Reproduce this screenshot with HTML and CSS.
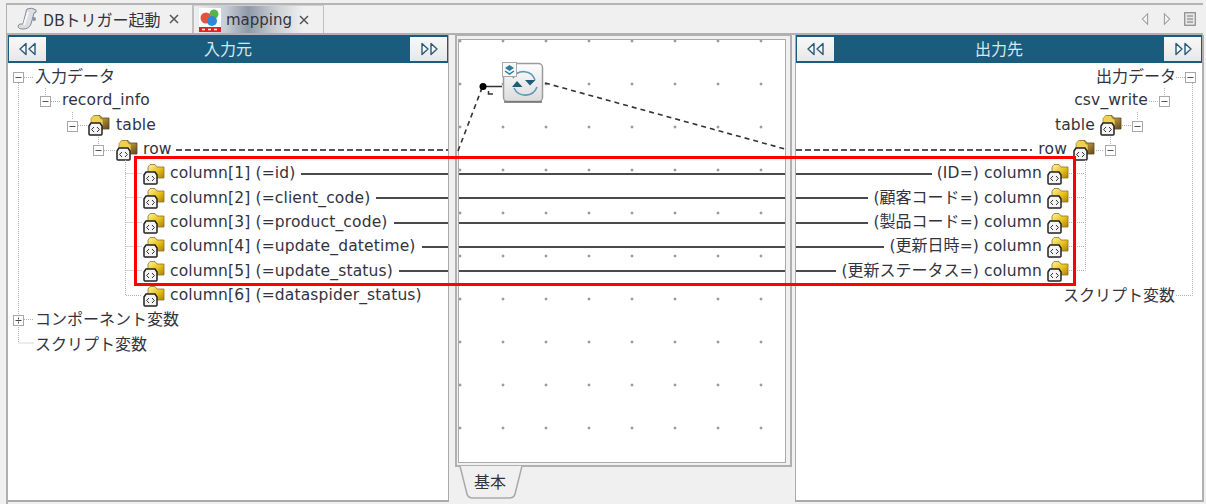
FILE: index.html
```html
<!DOCTYPE html>
<html lang="ja">
<head>
<meta charset="utf-8">
<title>mapping</title>
<link rel="stylesheet" href="styles.css">
</head>
<body>
<svg class="defs" width="0" height="0" aria-hidden="true">
  <defs>
    <linearGradient id="fy" x1="0" y1="0" x2="1" y2="1"><stop offset="0" stop-color="#fff3a0"/><stop offset=".55" stop-color="#e9c21c"/><stop offset="1" stop-color="#a87f08"/></linearGradient>
    <linearGradient id="fb" x1="0" y1="0" x2="1" y2="1"><stop offset="0" stop-color="#f3e08c"/><stop offset=".5" stop-color="#b08a35"/><stop offset="1" stop-color="#5a4520"/></linearGradient>
    <symbol id="folder" viewBox="0 0 22 22">
      <path d="M5 4 L7 1.500 H12 L14 4 H21 V15 H5 Z" fill="url(#fy)" stroke="#8a7428" stroke-width=".8"/>
      <path d="M1 12 L3 9 H12 L14 12 V20 Q14 21 13 21 H2 Q1 21 1 20 Z" fill="#f4f4f4" stroke="#222" stroke-width="1.500"/>
      <path d="M6 13 L3.600 15.500 L6 18 M9 13 L11.400 15.500 L9 18" fill="none" stroke="#333" stroke-width="1"/>
    </symbol>
    <symbol id="folderb" viewBox="0 0 22 22">
      <path d="M5 4 L7 1.500 H12 L14 4 H21 V15 H5 Z" fill="url(#fb)" stroke="#5b4a22" stroke-width=".8"/>
      <path d="M3 4.500 L5.500 1.500 H11 L13 5 H15 V12 H3 Z" fill="#f0d050" stroke="#8a7428" stroke-width=".6"/>
      <path d="M1 12 L3 9 H12 L14 12 V20 Q14 21 13 21 H2 Q1 21 1 20 Z" fill="#f4f4f4" stroke="#222" stroke-width="1.500"/>
      <path d="M6 13 L3.600 15.500 L6 18 M9 13 L11.400 15.500 L9 18" fill="none" stroke="#333" stroke-width="1"/>
    </symbol>
    <symbol id="minus" viewBox="0 0 11 11">
      <rect x=".5" y=".5" width="10" height="10" fill="#fff" stroke="#a8a8a8"/>
      <path d="M2.500 5.500 H8.500" stroke="#555" stroke-width="1"/>
    </symbol>
    <symbol id="plus" viewBox="0 0 11 11">
      <rect x=".5" y=".5" width="10" height="10" fill="#fff" stroke="#a8a8a8"/>
      <path d="M2.500 5.500 H8.500 M5.500 2.500 V8.500" stroke="#444" stroke-width="1"/>
    </symbol>
    <symbol id="back" viewBox="0 0 20 14">
      <path d="M8 1.500 L2 7 L8 12.500 Z M17 1.500 L11 7 L17 12.500 Z" fill="#f4f7f9" stroke="#2a5a78" stroke-width="1.400" stroke-linejoin="round"/>
    </symbol>
    <symbol id="fwd" viewBox="0 0 20 14">
      <path d="M3 1.500 L9 7 L3 12.500 Z M12 1.500 L18 7 L12 12.500 Z" fill="#f4f7f9" stroke="#2a5a78" stroke-width="1.400" stroke-linejoin="round"/>
    </symbol>
  </defs>
</svg>

<div class="app">
  <div class="tabs">
    <div class="tab">
      <svg class="tab-icon" viewBox="0 0 22 24" width="22" height="24">
        <path d="M11 2 Q16 0 20 3 Q21 6 18 6 L15 17 Q13 22 7 22 Q2 22 2 19 Q3 16 7 17 L10 5 Q10 3 11 2 Z" fill="#dcdee4" stroke="#85888f" stroke-width="1"/>
        <path d="M12 5 L8 18" stroke="#f8f8f8" stroke-width="2"/>
        <circle cx="18" cy="12" r="2" fill="#8a93a8"/>
      </svg>
      <span class="tab-label"><span class="ja">DBトリガー起動</span></span>
      <svg class="tab-close" viewBox="0 0 12 12" width="12" height="12"><path d="M2 2 L10 10 M10 2 L2 10" stroke="#555" stroke-width="1.500"/></svg>
    </div>
    <div class="tab tab-active">
      <svg class="tab-icon" viewBox="0 0 22 24" width="22" height="24">
        <rect x="0" y="0" width="22" height="24" fill="#fff"/>
        <circle cx="7" cy="10" r="5.500" fill="#e5533c"/>
        <circle cx="15" cy="6" r="4.500" fill="#58b24a"/>
        <circle cx="13" cy="13" r="5" fill="#3288d8"/>
        <rect x="0" y="19" width="22" height="5" fill="#e02222"/>
        <path d="M3 21.500 H6 M9 21.500 H12 M15 21.500 H18" stroke="#fff" stroke-width="1.500"/>
      </svg>
      <span class="tab-label">mapping</span>
      <svg class="tab-close" viewBox="0 0 12 12" width="12" height="12"><path d="M2 2 L10 10 M10 2 L2 10" stroke="#555" stroke-width="1.500"/></svg>
    </div>
    <div class="nav">
      <svg viewBox="0 0 10 16" width="10" height="14"><path d="M8 2 L2 8 L8 14 Z" fill="#f4f4f4" stroke="#9a9a9a" stroke-width="1.200"/></svg>
      <svg viewBox="0 0 10 16" width="10" height="14"><path d="M2 2 L8 8 L2 14 Z" fill="#f4f4f4" stroke="#9a9a9a" stroke-width="1.200"/></svg>
      <svg viewBox="0 0 12 14" width="12" height="14"><rect x=".7" y=".7" width="10.600" height="12.600" fill="#e6e6e6" stroke="#8a8a8a" stroke-width="1.200"/><path d="M3 4 H9 M3 7 H9 M3 10 H9" stroke="#777"/></svg>
    </div>
  </div>

  <div class="panes">
    <section class="pane pane-left">
      <header class="pane-head">
        <button class="head-btn"><svg width="20" height="14"><use href="#back"/></svg></button>
        <span class="head-title ja">入力元</span>
        <button class="head-btn"><svg width="20" height="14"><use href="#fwd"/></svg></button>
      </header>
      <div class="tree">
        <div class="row l0"><svg class="box"><use href="#minus"/></svg><span class="txt ja">入力データ</span></div>
        <div class="row l1"><svg class="box"><use href="#minus"/></svg><span class="txt">record_info</span></div>
        <div class="row l2"><svg class="box"><use href="#minus"/></svg><svg class="ico"><use href="#folderb"/></svg><span class="txt">table</span></div>
        <div class="row l3"><svg class="box"><use href="#minus"/></svg><svg class="ico"><use href="#folderb"/></svg><span class="txt">row</span><i class="dash"></i></div>
        <div class="row l4"><svg class="ico"><use href="#folder"/></svg><span class="txt">column[1] (=id)</span><i class="link"></i></div>
        <div class="row l4"><svg class="ico"><use href="#folder"/></svg><span class="txt">column[2] (=client_code)</span><i class="link"></i></div>
        <div class="row l4"><svg class="ico"><use href="#folder"/></svg><span class="txt">column[3] (=product_code)</span><i class="link"></i></div>
        <div class="row l4"><svg class="ico"><use href="#folder"/></svg><span class="txt">column[4] (=update_datetime)</span><i class="link"></i></div>
        <div class="row l4"><svg class="ico"><use href="#folder"/></svg><span class="txt">column[5] (=update_status)</span><i class="link"></i></div>
        <div class="row l4"><svg class="ico"><use href="#folder"/></svg><span class="txt">column[6] (=dataspider_status)</span></div>
        <div class="row l0"><svg class="box"><use href="#plus"/></svg><span class="txt ja">コンポーネント変数</span></div>
        <div class="row l0b"><span class="txt ja">スクリプト変数</span></div>
      </div>
    </section>

    <section class="pane-mid">
      <div class="folder">
        <div class="canvas">
          <div class="link-row"><i class="link"></i></div>
          <div class="link-row"><i class="link"></i></div>
          <div class="link-row"><i class="link"></i></div>
          <div class="link-row"><i class="link"></i></div>
          <div class="link-row"><i class="link"></i></div>
        </div>
      </div>
      <div class="sheet-tab">
        <svg class="sheet-shape" viewBox="0 0 68 34" width="68" height="34"><path d="M5 0 L12 28 Q13 32 18 32 L54 32 Q59 32 60 28 L67 0" fill="#f0f0f0" stroke="#aaa" stroke-width="1.500"/></svg>
        <span class="sheet-label ja">基本</span>
      </div>
    </section>

    <section class="pane pane-right">
      <header class="pane-head">
        <button class="head-btn"><svg width="20" height="14"><use href="#back"/></svg></button>
        <span class="head-title ja">出力先</span>
        <button class="head-btn"><svg width="20" height="14"><use href="#fwd"/></svg></button>
      </header>
      <div class="tree tree-right">
        <div class="row r0"><span class="txt ja">出力データ</span><svg class="box"><use href="#minus"/></svg></div>
        <div class="row r1"><span class="txt">csv_write</span><svg class="box"><use href="#minus"/></svg></div>
        <div class="row r2"><span class="txt">table</span><svg class="ico"><use href="#folderb"/></svg><svg class="box"><use href="#minus"/></svg></div>
        <div class="row r3"><i class="dash"></i><span class="txt">row</span><svg class="ico"><use href="#folderb"/></svg><svg class="box"><use href="#minus"/></svg></div>
        <div class="row r4"><i class="link"></i><span class="txt">(ID=) column</span><svg class="ico"><use href="#folder"/></svg></div>
        <div class="row r4"><i class="link"></i><span class="txt">(<span class="ja">顧客コード</span>=) column</span><svg class="ico"><use href="#folder"/></svg></div>
        <div class="row r4"><i class="link"></i><span class="txt">(<span class="ja">製品コード</span>=) column</span><svg class="ico"><use href="#folder"/></svg></div>
        <div class="row r4"><i class="link"></i><span class="txt">(<span class="ja">更新日時</span>=) column</span><svg class="ico"><use href="#folder"/></svg></div>
        <div class="row r4"><i class="link"></i><span class="txt">(<span class="ja">更新ステータス</span>=) column</span><svg class="ico"><use href="#folder"/></svg></div>
        <div class="row r0b"><span class="txt ja">スクリプト変数</span></div>
      </div>
    </section>
  </div>

  <svg class="overlay" viewBox="0 0 1206 504" width="1206" height="504" aria-hidden="true">
    <g class="guides">
      <path d="M18.500 83 V343 H34 M24 77.500 H34 M24 319.500 H34"/>
      <path d="M45.500 88 V95 M51 101.500 H60"/>
      <path d="M72.500 112 V119 M78 125.500 H87"/>
      <path d="M98.500 137 V144 M104 150.500 H115"/>
      <path d="M125.500 160 V295.500 H142 M125.500 173.500 H142 M125.500 197.500 H142 M125.500 222.500 H142 M125.500 246.500 H142 M125.500 270.500 H142"/>
      <path d="M1192.500 83 V295.500 H1176 M1176 77.500 H1185"/>
      <path d="M1164.500 88 V95 M1149 101.500 H1158"/>
      <path d="M1137.500 112 V119 M1122 125.500 H1131"/>
      <path d="M1110.500 137 V144 M1096 150.500 H1104"/>
      <path d="M1085.500 160 V270.500 H1069 M1069 173.500 H1085 M1069 197.500 H1085 M1069 222.500 H1085 M1069 246.500 H1085"/>
    </g>
    <path class="conn" d="M458 151 L482 88"/>
    <path class="conn" d="M545 83 L785 149"/>
    <path class="solid" d="M484 86.500 H502 M488.500 91 V94 H493"/>
    <circle cx="483" cy="86.500" r="3.500" fill="#000"/>
    <defs><linearGradient id="cg" x1="0" y1="0" x2="0" y2="1"><stop offset="0" stop-color="#fdfdfd"/><stop offset="1" stop-color="#dcdcdc"/></linearGradient></defs>
    <rect x="503.500" y="63.500" width="39" height="38" rx="4" fill="url(#cg)" stroke="#9c9c9c" stroke-width="1.500"/>
    <path d="M504 102 H542" stroke="#6c6c6c" stroke-width="1.500"/>
    <path d="M513 78 A12 12 0 0 1 535 80" fill="none" stroke="#5d9ab8" stroke-width="1.600"/>
    <path d="M525 80 H535.500 L530 85.500 Z" fill="#1f5c7c"/>
    <path d="M537 87 A12.500 12.500 0 0 1 514 88" fill="none" stroke="#5d9ab8" stroke-width="1.600"/>
    <path d="M512 87 H522.500 L517 81 Z" fill="#1f5c7c"/>
    <rect x="502.500" y="62.500" width="14" height="14" fill="#f7f7f7" stroke="#a8a8a8"/>
    <path d="M505 68 L509.500 65 L514 68 L509.500 71 Z" fill="#2f7b9c"/>
    <path d="M505 71 L509.500 74 L514 71" fill="none" stroke="#2f7b9c" stroke-width="1.500"/>
    <rect class="mark" x="135.500" y="157.500" width="939" height="127"/>
  </svg>
</div>
</body>
</html>
```
FILE: styles.css
```css
* { box-sizing: border-box; }
html, body { margin: 0; height: 100%; }
body {
  background: #f0f0f0;
  overflow: hidden;
  font-family: "DejaVu Sans", "Noto Sans CJK JP", sans-serif;
  font-size: 15.5px;
  letter-spacing: .15px;
  color: #33333f;
}
.ja {
  font-family: "Noto Sans CJK JP", sans-serif;
  font-size: 16px;
  letter-spacing: 0;
}
.defs { position: absolute; }
.app {
  position: relative;
  height: 504px;
  width: 1206px;
  padding: 3px 3px 0 6px;
  display: flex;
  flex-direction: column;
}
.tabs {
  height: 32px;
  flex: none;
  display: flex;
  border-top: 2px solid #b4b4b4;
  border-bottom: 2px solid #b0b0b0;
  border-left: 1px solid #b0b0b0;
  align-items: stretch;
}
.tab {
  width: 186px;
  display: flex;
  align-items: center;
  padding-left: 9px;
  gap: 5px;
  border-right: 1px solid #c0c0c0;
}
.tab-active {
  width: 131px;
  padding-left: 5px;
  gap: 5px;
  background: linear-gradient(90deg, #eef0f2 0, #c6ccd4 25%, #8f99a8 42%, #c8ccd2 62%, #f0f0f0 85%);
  border-top: 1px solid #d0d0d0;
  border-left: 1px solid #c0c0c0;
}
.tab-icon { flex: none; }
.tab-label { white-space: nowrap; font-size: 15px; letter-spacing: 0; }
.tab-close { flex: none; margin-left: 2px; }
.tab-active .tab-close { margin-left: 1px; }
.nav {
  margin-left: auto;
  display: flex;
  align-items: center;
  gap: 12px;
  padding-right: 7px;
}
.panes {
  flex: 1;
  min-height: 0;
  display: grid;
  grid-template-columns: 442px 346px 408px;
  border-left: 2px solid #b0b0b0;
}
.pane {
  display: flex;
  flex-direction: column;
  background: #fff;
  min-width: 0;
  height: 467px;
}
.pane-left { border-right: 1px solid #aaa; border-bottom: 2px solid #aaa; width: 441px; }
.pane-right { border-left: 1px solid #aaa; border-right: 2px solid #b0b0b0; border-bottom: 2px solid #aaa; margin-left: -1px; }
.pane-head {
  height: 28px;
  flex: none;
  display: flex;
  align-items: stretch;
  background: #1a5c7e;
  padding: 1px 0;
}
.head-btn {
  width: 39px;
  padding: 0;
  margin: 0;
  border: 1px solid #1a5c7e;
  background: linear-gradient(#f8f8f8, #e8e8e8);
  display: flex;
  align-items: center;
  justify-content: center;
}
.head-title {
  flex: 1;
  text-align: center;
  color: #d9e6ee;
  line-height: 25px;
}
.tree { flex: 1; min-height: 0; }
.row {
  height: 24.33px;
  display: flex;
  align-items: center;
  white-space: nowrap;
}
.txt { flex: none; padding-top: 2px; line-height: 20px; }
.txt .ja { line-height: 1; }
.txt.ja { padding-top: 0; }
.box { width: 11px; height: 11px; flex: none; margin-top: 5px; }
.ico { width: 22px; height: 22px; flex: none; margin-top: 3px; }
.link { flex: 1; height: 2px; background: #4a4a4a; display: block; margin-top: 3px; }
.dash {
  flex: 1;
  height: 2px;
  display: block;
  margin-top: 3px;
  background: repeating-linear-gradient(90deg, #555 0 6px, transparent 6px 9px);
}

.l0 { padding-left: 5px; gap: 11px; }
.l0b { padding-left: 27px; }
.l1 { padding-left: 32px; gap: 11px; }
.l2 { padding-left: 59px; gap: 10px; }
.l3 { padding-left: 85px; gap: 12px; }
.l4 { padding-left: 135px; gap: 5px; }
.l2 .txt { margin-left: -4px; }
.l3 .txt { margin-left: -7px; }
.l3 .dash { margin-left: -8px; }
.l4 .link { margin-left: 1px; }

.r0 { justify-content: flex-end; padding-right: 6px; gap: 9px; }
.r0b { justify-content: flex-end; padding-right: 27px; }
.r1 { justify-content: flex-end; padding-right: 32px; gap: 11px; }
.r2 { justify-content: flex-end; padding-right: 59px; gap: 5px; }
.r2 .box { margin-left: 5px; }
.r3 { padding-right: 86px; gap: 6px; }
.r3 .box { margin-left: 4px; }
.r4 { padding-right: 133px; gap: 5px; }

.pane-mid {
  display: flex;
  flex-direction: column;
  padding: 0 4px 0 6px;
  background: #f0f0f0;
  margin-left: -1px;
}
.folder {
  height: 432px;
  border: 2px solid #b0b0b0;
  border-top-width: 1px;
  padding: 3px 4px 3px 1px;
  flex: none;
}
.canvas {
  height: 424px;
  background-color: #fff;
  border: 1px solid #aaa;
  background-image: radial-gradient(circle, #555 .9px, transparent 1.2px);
  background-size: 43px 43px;
  background-position: -20.5px -20.5px;
  padding-top: 120.5px;
}
.link-row { height: 24.33px; display: flex; align-items: center; }
.sheet-tab {
  position: relative;
  width: 68px;
  height: 34px;
  flex: none;
  margin-top: -1px;
  display: flex;
  align-items: center;
  justify-content: center;
}
.sheet-shape { position: absolute; left: 0; top: 0; }
.sheet-label { position: relative; color: #333; margin-left: 2px; margin-top: -4px; }
.overlay { position: absolute; left: 0; top: 0; pointer-events: none; }
.guides path { fill: none; stroke: #b0b0b0; stroke-width: 1; stroke-dasharray: 1 1; }
.conn { fill: none; stroke: #333; stroke-width: 1.600; stroke-dasharray: 5 4; }
.solid { fill: none; stroke: #333; stroke-width: 1.500; }
.mark { fill: none; stroke: #f00; stroke-width: 3; }
```
